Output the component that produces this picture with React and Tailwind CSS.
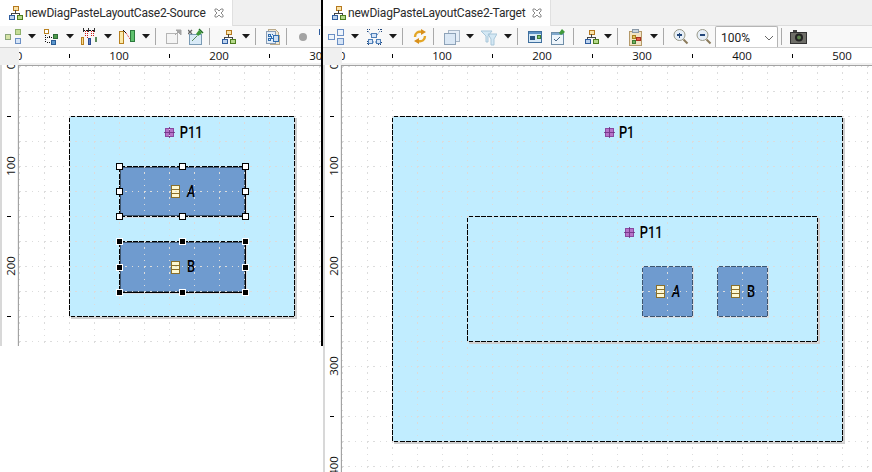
import React from "react";

const Svg = ({ className = "", w = 16, children }) => (
  <svg width={w} height="18" viewBox={`0 0 ${w} 18`} className={`shrink-0 ${className}`} shapeRendering="crispEdges">
    {children}
  </svg>
);
const B = ({ x, y, w, h, f, s }) => <rect x={x + 0.5} y={y + 0.5} width={w} height={h} fill={f} stroke={s} />;

const Arrow = ({ className = "" }) => (
  <svg width="8" height="5" viewBox="0 0 8 5" className={`shrink-0 ${className}`}>
    <path d="M0 0h8L4 4.5z" fill="#1a1a1a" />
  </svg>
);
const Sep = ({ className = "" }) => <div className={`w-px h-[17px] shrink-0 bg-[#a9a9a9] ${className}`} />;

const Tree = ({ className, size = 16 }) => (
  <Svg className={className} w={size}>
    <B x={5} y={2} w={5} h={4} f="#fbe3a8" s="#b5791f" />
    <path d="M7.5 6v3M3.5 11V9h8v2" fill="none" stroke="#444" />
    <B x={1} y={11} w={5} h={4} f="#bcd2ee" s="#2f5d9e" />
    <B x={9} y={11} w={5} h={4} f="#b5d98a" s="#4d7d1e" />
  </Svg>
);
const I1 = ({ className }) => (
  <Svg className={className} w={17}>
    <B x={0} y={6} w={5} h={5} f="#d6e3a6" s="#8aa57a" />
    <B x={10} y={1} w={5} h={5} f="#c4dc96" s="#8db06a" />
    <B x={10} y={10} w={5} h={5} f="#d5e4f7" s="#6b8fc4" />
  </Svg>
);
const I2 = ({ className }) => (
  <Svg className={className}>
    <B x={0} y={1} w={4} h={4} f="#fff" s="#b8801f" />
    <path d="M1 7v8M3 9h6M3 14h4" stroke="#111" strokeDasharray="1 1" fill="none" />
    <path d="M6 7v4l-2-2zM8 12v4l-2-2z" fill="#111" />
    <B x={9} y={6} w={4} h={4} f="#4f9a4a" s="#2c6b35" />
    <B x={7} y={12} w={4} h={4} f="#5a96cc" s="#2a5c94" />
  </Svg>
);
const I3 = ({ className }) => (
  <Svg className={className}>
    <path d="M2 2h11" stroke="#111" strokeDasharray="2 1" />
    <path d="M2 0v4M7 0v4M13 0v4" stroke="#333" />
    <path d="M4 3v6M6 3v7M10 3v5M12 3v5" stroke="#d01818" strokeDasharray="1 1" />
    <B x={0} y={9} w={2} h={7} f="#f6d98e" s="#b8801f" />
    <B x={7} y={10} w={2} h={6} f="#5f7fc0" s="#2c4a90" />
    <rect x={14} y={9} width={2} height={5} fill="#5b8a5a" />
  </Svg>
);
const I4 = ({ className }) => (
  <Svg className={className}>
    <B x={0} y={3} w={4} h={12} f="#fbeaaa" s="#b8801f" />
    <B x={11} y={2} w={4} h={11} f="#5fc16d" s="#2c7a3d" />
    <path d="M4 2l3 3" stroke="#111" fill="none" shapeRendering="auto" />
    <path d="M7 5l4 6" stroke="#d01818" strokeDasharray="1 1" fill="none" shapeRendering="auto" />
  </Svg>
);
const I5 = ({ className }) => (
  <Svg className={className}>
    <B x={0} y={5} w={11} h={10} f="#f4f4f4" s="#b5b5b5" />
    <path d="M9 7l5-5M10 2h5v5z" stroke="#a5a5a5" fill="#a5a5a5" shapeRendering="auto" />
  </Svg>
);
const I6 = ({ className }) => (
  <Svg className={className}>
    <B x={1} y={6} w={12} h={10} f="#d9eaf7" s="#7a9bb5" />
    <path d="M0 2l4 4M4 2l-4 4" stroke="#666" strokeWidth="1.3" shapeRendering="auto" />
    <path d="M8 6l3-4 3 3-4 3z" fill="#3f9a3a" shapeRendering="auto" />
    <path d="M11 1l4 4" stroke="#1f6e24" strokeWidth="1.5" shapeRendering="auto" />
    <path d="M4 13l5-5" stroke="#5b8a5a" shapeRendering="auto" />
  </Svg>
);
const Docs = ({ className }) => (
  <Svg className={className}>
    <path d="M3.5 1.5h7l3 3v3h1v9h-9v-2h-2z" fill="#f0e6cf" stroke="#b9a98a" />
    <B x={1} y={3} w={9} h={12} f="#e4eef8" s="#8a9db5" />
    <path d="M3 6h2v2H3zM7 6h1M3 10h2v2H3zM7 10h2M6 8v3" stroke="#2f6db0" fill="none" />
    <B x={8} y={7} w={5} h={6} f="#cfe0f2" s="#2f6db0" />
  </Svg>
);
const Dot = ({ className }) => (
  <Svg className={className}>
    <circle cx="8" cy="9" r="4" fill="#a3a3a3" shapeRendering="auto" />
  </Svg>
);
const R1 = ({ className }) => (
  <Svg className={className} w={17}>
    <B x={0} y={6} w={6} h={5} f="#eef4fb" s="#6b8fc4" />
    <B x={9} y={1} w={6} h={6} f="#eef4fb" s="#6b8fc4" />
    <B x={9} y={10} w={6} h={6} f="#d5e4f7" s="#6b8fc4" />
  </Svg>
);
const R2 = ({ className }) => (
  <Svg className={className}>
    <path d="M2 3l5 7M14 3l-5 7M5 14h6" stroke="#4f7fb8" strokeDasharray="1 1" fill="none" shapeRendering="auto" />
    <path d="M1 1h3M1 1v3M12 1h3M15 1v3M1 13v3h3M12 16h3v-3" stroke="#23477a" strokeDasharray="1 1" fill="none" />
    <B x={5} y={5} w={5} h={4} f="#d5e4f7" s="#4f7fb8" />
    <B x={2} y={11} w={4} h={4} f="#d5e4f7" s="#4f7fb8" />
    <B x={10} y={11} w={4} h={4} f="#d5e4f7" s="#4f7fb8" />
  </Svg>
);
const Sync = ({ className }) => (
  <Svg className={className}>
    <g fill="none" stroke="#e3a626" strokeWidth="2.4" shapeRendering="auto">
      <path d="M3 9c0-4 3-6 7-5" />
      <path d="M13 8c0 4-3 6-7 5" />
    </g>
    <path d="M9 1l5 3-5 3zM7 10l-5 3 5 3z" fill="#d88f1c" shapeRendering="auto" />
  </Svg>
);
const Stack = ({ className }) => (
  <Svg className={className}>
    <B x={4} y={2} w={11} h={11} f="#e6eef7" s="#a9b8c8" />
    <B x={0} y={5} w={11} h={11} f="#dbe8f5" s="#8da2b8" />
  </Svg>
);
const Funnel = ({ className }) => (
  <Svg className={className}>
    <path d="M0 3h11L7 8v6H5V8zM7 6h9l-3 5v6h-3v-6z" fill="#d4e8f4" stroke="#a9c7da" shapeRendering="auto" />
  </Svg>
);
const Win = ({ className }) => (
  <Svg className={className}>
    <B x={1} y={3} w={13} h={11} f="#d7e9f7" s="#3f6f9e" />
    <rect x={2} y={4} width={12} height={2} fill="#5b91c4" />
    <rect x={3} y={8} width={5} height={4} fill="#27527f" />
    <B x={10} y={7} w={3} h={3} f="#7fc06a" s="#3f7a33" />
  </Svg>
);
const WinPin = ({ className }) => (
  <Svg className={className}>
    <B x={1} y={4} w={12} h={12} f="#eef5fb" s="#6f8ea8" />
    <rect x={2} y={5} width={11} height={2} fill="#7fa8cc" />
    <path d="M4 11l2 2 4-4" stroke="#4a6a88" fill="none" shapeRendering="auto" />
    <path d="M9 5l3-4 3 3-4 3z" fill="#3f9a3a" shapeRendering="auto" />
  </Svg>
);
const Clip = ({ className }) => (
  <Svg className={className}>
    <B x={1} y={3} w={12} h={14} f="#f1e3c4" s="#b59a6a" />
    <B x={4} y={1} w={6} h={3} f="#c9d4de" s="#8a98a6" />
    <B x={4} y={7} w={3} h={3} f="#e0c060" s="#a8801f" />
    <B x={8} y={9} w={4} h={3} f="#e25b4a" s="#a8301f" />
    <B x={4} y={12} w={3} h={3} f="#6fb05a" s="#3f7a33" />
  </Svg>
);
const Zoom = ({ className, plus }) => (
  <Svg className={className}>
    <circle cx="6.5" cy="7" r="5.5" fill="#e6eef6" stroke="#9a9a8a" shapeRendering="auto" />
    <path d="M4 7h5" stroke="#23477a" strokeWidth="1.6" />
    {plus && <path d="M6.500 4.500v5" stroke="#23477a" strokeWidth="1.6" />}
    <path d="M10.500 11.500l4 4" stroke="#8a7a5a" strokeWidth="2" shapeRendering="auto" />
  </Svg>
);
const Camera = ({ className }) => (
  <Svg className={className} w={17}>
    <rect x={3} y={2} width={4} height={2} fill="#444" />
    <rect x={0} y={4} width={16} height={11} fill="#6e6e68" stroke="#333" />
    <circle cx="9" cy="9.500" r="4" fill="#222" shapeRendering="auto" />
    <circle cx="9" cy="9.500" r="2" fill="#5a7f4a" shapeRendering="auto" />
  </Svg>
);

const TabIcon = () => <Tree className="ml-[8px]" size={15} />;
const CloseX = () => (
  <svg width="10" height="10" viewBox="0 0 10 10" className="shrink-0">
    <path d="M1 1h2l2 2 2-2h2v2L7 5l2 2v2H7L5 7 3 9H1V7l2-2-2-2z" fill="#fff" stroke="#8a8a8a" />
  </svg>
);

const Tab = ({ title, tabW }) => (
  <div className="h-[26px] flex bg-[#f0f0f0] border-b border-[#dcdcdc] shrink-0">
    <div className={`${tabW} h-[26px] bg-white flex items-center border-r border-[#e0e0e0]`}>
      <TabIcon />
      <span className="ml-[2px] text-[12px] tracking-[-0.2px] text-[#2b2b2b] whitespace-nowrap font-['Roboto',sans-serif]">{title}</span>
      <span className="ml-auto mr-[8px] flex"><CloseX /></span>
    </div>
  </div>
);

const Hruler = ({ labels, ticks }) => (
  <div className="h-[17px] flex shrink-0">
    <div className="w-[19px] bg-[#f0f0f0] shrink-0" />
    <div className="relative flex-1 overflow-hidden bg-white border-b-2 border-[#f0f0f0]">
      {labels.map((n) => (
        <span key={n} className="absolute top-0 -translate-x-1/2 text-[11.5px] leading-[16px] text-[#111] font-['Open_Sans',sans-serif]" style={{ left: n }}>
          {n}
        </span>
      ))}
      {ticks.map((t) => (
        <i key={t} className="absolute top-[6px] w-px h-[4px] bg-black" style={{ left: t + 50 }} />
      ))}
    </div>
  </div>
);

const Vruler = ({ labels, ticks }) => (
  <div className="relative w-[19px] shrink-0 overflow-hidden bg-white border-l-2 border-[#d8d8d8] border-r border-r-[#a3a3a3] shadow-[inset_-1px_0_0_#f0f0f0]">
    {labels.map((n) => (
      <span key={n} className="absolute left-[9px] -translate-x-1/2 -translate-y-1/2 -rotate-90 text-[11.5px] leading-[16px] text-[#111] font-['Open_Sans',sans-serif]" style={{ top: n + 1 }}>
        {n}
      </span>
    ))}
    {ticks.map((t) => (
      <i key={t} className="absolute left-[5px] w-[4px] h-px bg-black" style={{ top: t + 1 }} />
    ))}
  </div>
);

const Grid = ({ id }) => (
  <svg className="absolute inset-0 w-full h-full pointer-events-none z-10" shapeRendering="crispEdges">
    <defs>
      <pattern id={id} width="25" height="25" patternUnits="userSpaceOnUse" x="0" y="0">
        <path d="M0 0.500H25" stroke="#dcdcdc" strokeDasharray="1.500 4.750" />
        <path d="M0.500 0V25" stroke="#dcdcdc" strokeDasharray="1.500 4.750" />
      </pattern>
    </defs>
    <rect width="100%" height="100%" fill={`url(#${id})`} />
  </svg>
);

const PkgIcon = () => (
  <svg width="11" height="11" viewBox="0 0 11 11" className="shrink-0 -mt-[1px]" shapeRendering="crispEdges">
    <rect x="1.500" y="1.500" width="8" height="8" fill="#b673c9" stroke="#8a4aa0" />
    <path d="M5.500 0v11M0 5.500h11" stroke="#6a2f80" strokeWidth="1" opacity="0.8" />
  </svg>
);
const ClassIcon = () => (
  <svg width="9" height="13" viewBox="0 0 9 13" className="shrink-0" shapeRendering="crispEdges">
    <rect x="0.500" y="0.500" width="8" height="12" fill="#fdf8d2" stroke="#8a6f2a" />
    <path d="M1 4.500h7M1 8.500h7" stroke="#8a6f2a" />
  </svg>
);

const label = "inline-block scale-x-[.8] text-[16px] leading-[18px] text-black font-medium font-['Roboto',sans-serif]";

const Pkg = ({ name, className }) => (
  <div className={`absolute border border-black bg-[#c1edff] shadow-[2px_2px_0_#cfcfcf] flex justify-center pt-[7px] ${className}`}>
    <div className="flex items-center h-[18px] gap-[2px] pl-[5px]">
      <PkgIcon />
      <span className={label}>{name}</span>
    </div>
  </div>
);

const Cls = ({ name, italic, className }) => (
  <div className={`absolute bg-[#6f9bcf] border border-[#3e5670] shadow-[1px_1px_0_#d6dde4] flex items-center justify-center gap-[6px] pl-[2px] ${className}`}>
    <ClassIcon />
    <span className={`${label} ${italic ? "italic" : ""}`}>{name}</span>
  </div>
);

const Handle = ({ x, y, dark }) => (
  <i className={`absolute z-20 w-[7px] h-[7px] border ${dark ? "bg-black border-white" : "bg-white border-black"}`} style={{ left: x - 3, top: y - 3 }} />
);

const Handles = ({ l, t, r, b, dark }) => {
  const mx = Math.round((l + r) / 2);
  const my = Math.round((t + b) / 2);
  return [[l, t], [mx, t], [r, t], [l, my], [r, my], [l, b], [mx, b], [r, b]].map(([x, y]) => (
    <Handle key={`${x}-${y}`} x={x} y={y} dark={dark} />
  ));
};

const bar = "h-[21px] flex items-center bg-[#f8f8f8] border-b border-[#cfcfcf] overflow-hidden shrink-0 box-content";

export default function App() {
  return (
    <div className="w-[872px] h-[472px] flex bg-white overflow-hidden">
      {/* source editor */}
      <div className="w-[321px] h-[346px] flex flex-col shrink-0 overflow-hidden">
        <Tab title="newDiagPasteLayoutCase2-Source" tabW="w-[233px]" />
        <div className={`${bar} pl-[5px]`}>
          <I1 />
          <Arrow className="ml-[6px]" />
          <I2 className="ml-[8px]" />
          <Arrow className="ml-[6px]" />
          <I3 className="ml-[7px]" />
          <Arrow className="ml-[7px]" />
          <I4 className="ml-[7px]" />
          <Arrow className="ml-[7px]" />
          <Sep className="ml-[5px]" />
          <I5 className="ml-[10px]" />
          <I6 className="ml-[6px]" />
          <Sep className="ml-[5px]" />
          <Tree className="ml-[11px]" />
          <Arrow className="ml-[5px]" />
          <Sep className="ml-[5px]" />
          <Docs className="ml-[9px]" />
          <Sep className="ml-[5px]" />
          <Dot className="ml-[8px]" />
          <div className="ml-[8px] w-px h-[6px] bg-[#2f5d9e] shrink-0 mb-[9px]" />
        </div>
        <Hruler labels={[0, 100, 200, 300]} ticks={[0, 100, 200]} />
        <div className="flex flex-1 min-h-0">
          <Vruler labels={[0, 100, 200]} ticks={[50, 150, 250]} />
          <div className="relative flex-1 overflow-hidden bg-white border-t border-[#a3a3a3] box-border">
            <Grid id="g1" />
            <Pkg name="P11" className="left-[50px] top-[50px] w-[226px] h-[201px]" />
            <Cls name="A" italic className="left-[100px] top-[100px] w-[127px] h-[51px] border-black ring-1 ring-inset ring-[#3e5670]" />
            <Cls name="B" className="left-[100px] top-[175px] w-[127px] h-[52px] border-black ring-1 ring-inset ring-[#3e5670]" />
            <Handles l={100} t={100} r={226} b={150} />
            <Handles l={100} t={175} r={226} b={226} dark />
          </div>
        </div>
      </div>

      <div className="w-[2px] h-[346px] bg-black shrink-0" />

      {/* target editor */}
      <div className="flex-1 h-full flex flex-col overflow-hidden">
        <Tab title="newDiagPasteLayoutCase2-Target" tabW="w-[228px]" />
        <div className={`${bar} pl-[5px]`}>
          <R1 />
          <Arrow className="ml-[6px]" />
          <R2 className="ml-[7px]" />
          <Arrow className="ml-[7px]" />
          <Sep className="ml-[5px]" />
          <Sync className="ml-[9px]" />
          <Sep className="ml-[5px]" />
          <Stack className="ml-[10px]" />
          <Arrow className="ml-[6px]" />
          <Funnel className="ml-[7px]" />
          <Arrow className="ml-[7px]" />
          <Sep className="ml-[5px]" />
          <Win className="ml-[9px]" />
          <WinPin className="ml-[7px]" />
          <Sep className="ml-[7px]" />
          <Tree className="ml-[10px]" />
          <Arrow className="ml-[4px]" />
          <Sep className="ml-[5px]" />
          <Clip className="ml-[10px]" />
          <Arrow className="ml-[6px]" />
          <Sep className="ml-[5px]" />
          <Zoom plus className="ml-[9px]" />
          <Zoom className="ml-[7px]" />
          <div className="ml-[3px] w-[63px] h-[22px] self-start flex items-center bg-white border border-b-0 border-[#b5b5b5] rounded-t-[2px] shrink-0 pl-[5px] pr-[3px]">
            <span className="text-[12px] text-[#222] font-['Roboto',sans-serif]">100%</span>
            <svg width="10" height="6" viewBox="0 0 10 6" className="ml-auto">
              <path d="M1 1l4 4 4-4" fill="none" stroke="#666" />
            </svg>
          </div>
          <Sep className="ml-[3px]" />
          <Camera className="ml-[8px]" />
        </div>
        <Hruler labels={[0, 100, 200, 300, 400, 500]} ticks={[0, 100, 200, 300, 400]} />
        <div className="flex flex-1 min-h-0">
          <Vruler labels={[0, 100, 200, 300, 400]} ticks={[50, 150, 250, 350]} />
          <div className="relative flex-1 overflow-hidden bg-white border-t border-[#a3a3a3]">
            <Grid id="g2" />
            <Pkg name="P1" className="left-[50px] top-[50px] w-[451px] h-[326px]" />
            <Pkg name="P11" className="left-[125px] top-[150px] w-[351px] h-[126px]" />
            <Cls name="A" italic className="left-[300px] top-[200px] w-[51px] h-[51px]" />
            <Cls name="B" className="left-[375px] top-[200px] w-[51px] h-[51px]" />
          </div>
        </div>
      </div>
    </div>
  );
}
